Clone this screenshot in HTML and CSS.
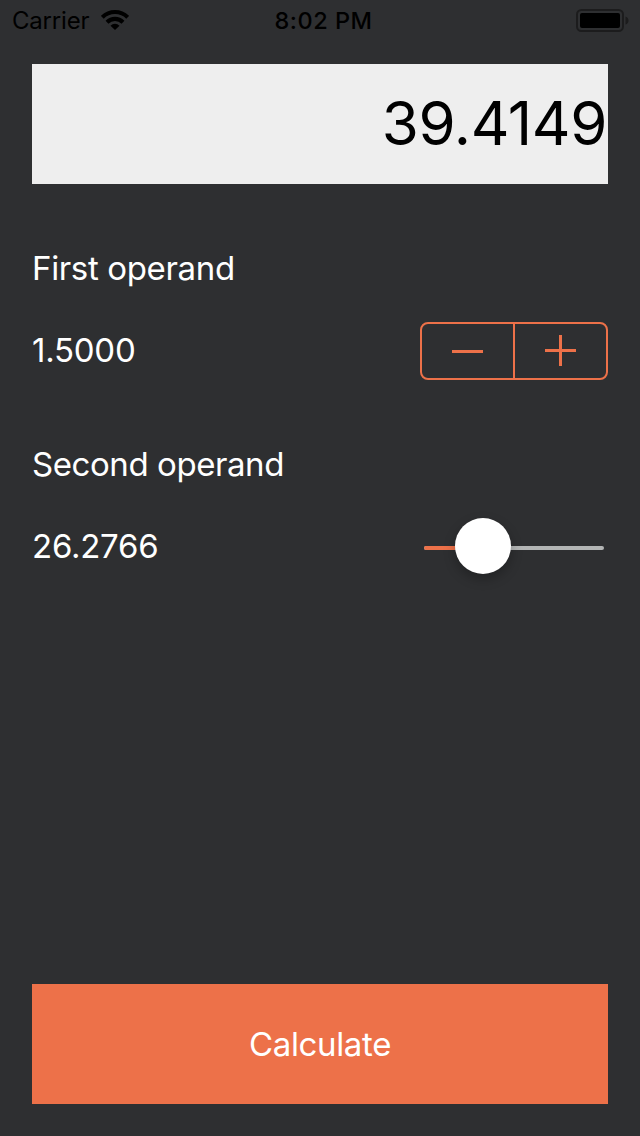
FILE: index.html
```html
<!DOCTYPE html>
<html lang="en">
<head>
<meta charset="utf-8">
<title>Calculator</title>
<link rel="stylesheet" href="styles.css">
</head>
<body>
<div class="screen">
  <header class="status">
    <div class="carrier"><span class="carrier-name">Carrier</span>
      <svg class="wifi" width="28" height="20" viewBox="0 0 28 20"><path d="M1.300 7.300A18 18 0 0 1 26.700 7.300M6 12.200A11.300 11.300 0 0 1 22 12.200" fill="none" stroke="#000" stroke-width="4.100"/><path d="M9.500 15.700A6.400 6.400 0 0 1 18.500 15.700L14 20Z"/></svg>
    </div>
    <span class="time">8:02 PM</span>
    <svg class="battery" width="53" height="23" viewBox="0 0 53 23"><rect x="1" y="1" width="46" height="21" rx="4.500" fill="none" stroke="#1c1c1d" stroke-width="2"/><rect x="4" y="4" width="40" height="15" rx="2"/><path d="M49.500 7.500Q52.500 8.500 52.500 11.500T49.500 15.500Z" fill="#1c1c1d"/></svg>
  </header>
  <main class="content">
    <output class="result">39.4149</output>
    <section class="operand">
      <h2 class="label">First operand</h2>
      <div class="row"><span class="value">1.5000</span>
        <div class="stepper"><button class="step minus" aria-label="Decrease"><svg width="31" height="31" viewBox="0 0 31 31"><path d="M0 15.500H31"/></svg></button><button class="step plus" aria-label="Increase"><svg width="31" height="31" viewBox="0 0 31 31"><path d="M0 15.500H31M15.500 0V31"/></svg></button></div>
      </div>
    </section>
    <section class="operand">
      <h2 class="label second">Second operand</h2>
      <div class="row"><span class="value">26.2766</span>
        <div class="slider"><span class="fill"></span><span class="thumb"></span></div>
      </div>
    </section>
    <button class="calculate">Calculate</button>
  </main>
</div>
</body>
</html>
```
FILE: styles.css
```css
* { box-sizing: border-box; }
body { margin: 0; background: #2e2f31; font-family: Inter, sans-serif; }
.screen { height: 1136px; display: flex; flex-direction: column; color: #fff; }
.status { height: 40px; display: grid; grid-template-columns: 1fr auto 1fr; padding: 0 11px 0 12px; align-items: center; color: #000; font-size: 24px; }
.carrier { display: flex; align-items: center; gap: 12px; }
.carrier-name { letter-spacing: -.2px; }
.time { font-weight: 500; font-size: 23.5px; letter-spacing: .5px; padding: 1px 0 0 6px; }
.battery { justify-self: end; }
.content { flex: 1; display: flex; flex-direction: column; padding: 24px 32px 32px; }
.result { height: 120px; padding: 0 1px 2px 0; background: #eee; color: #000; display: flex; align-items: center; justify-content: flex-end; font-size: 60px; letter-spacing: -.4px; }
.operand { margin-top: 64px; }
.label { height: 42px; line-height: 40px; margin: 0; font-size: 33px; font-weight: 400; letter-spacing: -.35px; }
.second { letter-spacing: -.43px; }
.row { height: 58px; margin-top: 32px; display: flex; align-items: center; justify-content: space-between; }
.value { font-size: 33px; letter-spacing: -.25px; padding-bottom: 2px; }
.stepper { width: 188px; height: 58px; border: 2px solid #ed7149; border-radius: 8px; display: flex; }
.step { width: 91px; border: 0; background: none; padding: 0; display: flex; align-items: center; justify-content: center; }
.plus { width: 93px; border-left: 2px solid #ed7149; }
.minus svg { margin-top: 1px; }
.plus svg { margin-bottom: 1px; }
.step path { stroke: #ed7149; stroke-width: 3; }
.slider { width: 180px; height: 4px; margin: 2px 4px 0 0; border-radius: 2px; background: #b3b5b5; display: flex; align-items: center; }
.fill { width: 31px; height: 4px; border-radius: 2px 0 0 2px; background: #ed7149; }
.thumb { width: 56px; height: 56px; margin-bottom: 4px; border-radius: 50%; background: #fff; box-shadow: 0 5px 12px #0004; }
.calculate { margin-top: auto; height: 120px; padding: 0 0 1px; border: 0; background: #ed7149; color: #fff; font: 33px Inter, sans-serif; letter-spacing: -.35px; }
```
